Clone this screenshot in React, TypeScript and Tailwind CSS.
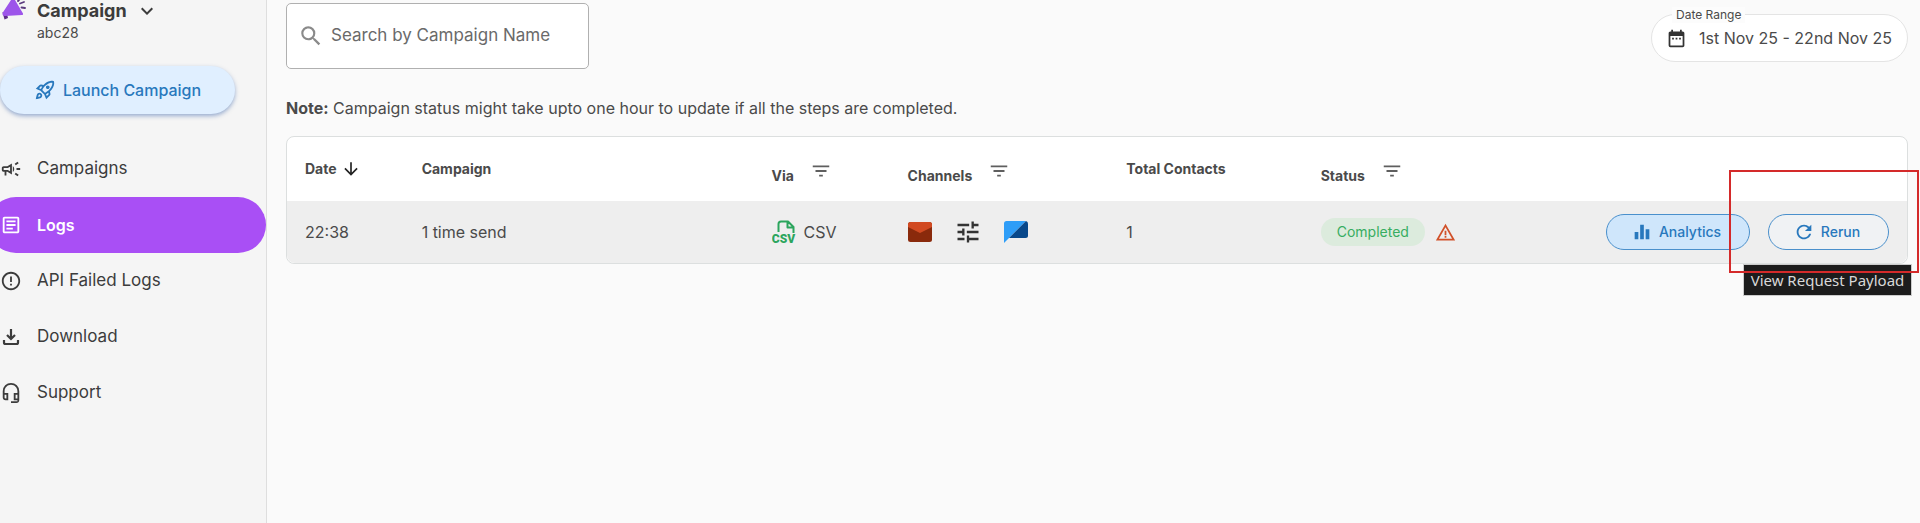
import type { ReactNode } from 'react'
import {
  MdArrowDownward,
  MdDateRange,
  MdEqualizer,
  MdErrorOutline,
  MdFilterList,
  MdKeyboardArrowDown,
  MdOutlineArticle,
  MdOutlineCampaign,
  MdOutlineHeadsetMic,
  MdOutlineRocketLaunch,
  MdRefresh,
  MdSearch,
  MdTune,
  MdWarningAmber,
} from 'react-icons/md'

function Logo() {
  return (
    <svg viewBox="0 0 26 20" className="h-5 w-[26px]" aria-hidden="true">
      <path d="M2.500 12l2 7.500 3.500-1.500-1-4z" fill="#5b2a86" />
      <path d="M11 0h4l8 13.500q.500 1.500-1 1.500L5 16q-3 0-2.500-3z" fill="#9d55ea" />
      <path
        d="M18 1l1-1M20 3.500l4-1.500M21.500 7.500l3.500.500"
        stroke="#5b3a7e"
        strokeWidth="1.800"
        strokeLinecap="round"
      />
    </svg>
  )
}

function DownloadIcon() {
  return (
    <svg
      viewBox="0 0 22 22"
      className="size-[22px]"
      fill="none"
      stroke="currentColor"
      strokeWidth="2.200"
      aria-hidden="true"
    >
      <path d="M11 3v10M7 9l4 4 4-4M4 14v2.500q0 1.500 1.500 1.500h11q1.500 0 1.500-1.500V14" />
    </svg>
  )
}

function CsvIcon() {
  return (
    <svg viewBox="0 0 24 24" className="size-6" fill="none" aria-hidden="true">
      <path
        d="M6.500 12V4q0-2.500 2.500-2.500H16l5.500 5.500v6M15.500 1.500V7.500H21.500"
        stroke="currentColor"
        strokeWidth="2"
        strokeLinejoin="round"
      />
      <text
        x="11.500"
        y="22.500"
        textAnchor="middle"
        fill="currentColor"
        className="font-['Roboto',sans-serif] text-[12px] font-black"
      >
        CSV
      </text>
    </svg>
  )
}

function MailIcon() {
  return (
    <svg viewBox="0 0 24 20" className="h-5 w-6" role="img" aria-label="Email">
      <rect width="24" height="20" rx="2.500" fill="#8a2a0c" />
      <path d="M0 5V2.500Q0 0 2.500 0h19Q24 0 24 2.500V5l-12 6z" fill="#d14a22" />
    </svg>
  )
}

function ChatIcon() {
  return (
    <svg viewBox="0 0 24 22" className="h-[22px] w-6" role="img" aria-label="RCS">
      <path d="M2.500 0H22L5 17l-5 5V2.500Q0 0 2.500 0z" fill="#2e9df7" />
      <path d="M22 0q2 .500 2 2.500V14.500q0 2.500-2.500 2.500H5z" fill="#08488a" />
    </svg>
  )
}

function NavItem({ icon, label, active }: { icon: ReactNode; label: string; active?: boolean }) {
  return (
    <a
      href="#"
      className={
        active
          ? 'flex h-14 items-center gap-[15px] rounded-full bg-[#a94ff5] pl-3 text-base font-semibold text-white'
          : 'flex h-14 items-center gap-[15px] pl-3 text-[17px] text-[#3c3c3c]'
      }
    >
      <span className="flex w-[22px] shrink-0 text-[22px] [&_svg]:stroke-current">{icon}</span>
      {label}
    </a>
  )
}

function FilterHeader({ label }: { label: string }) {
  return (
    <div className="flex items-start gap-4 pt-[5px]">
      <span className="pt-[9px]">{label}</span>
      <button type="button" aria-label={`Filter ${label}`} className="pt-[3px] text-[#5f5f5f]">
        <MdFilterList className="size-[22px]" />
      </button>
    </div>
  )
}

export default function App() {
  return (
    <div className="flex min-h-screen overflow-hidden bg-[#fafafa] font-['Inter',sans-serif] text-[#4a4a4a]">
      <aside className="w-[267px] shrink-0 border-r border-[#dedede] bg-[#f5f5f5]">
        <div className="flex gap-[11px]">
          <Logo />
          <div>
            <button
              type="button"
              className="flex items-center gap-2 text-lg leading-[22px] font-bold text-[#3c3c3c]"
            >
              Campaign
              <MdKeyboardArrowDown className="-my-1 size-6" />
            </button>
            <p className="mt-px text-sm">abc28</p>
          </div>
        </div>
        <button
          type="button"
          className="mt-[23px] flex h-12 w-[235px] items-center justify-center gap-[7px] rounded-full bg-[#e0efff] text-base font-medium text-[#2878bd] shadow-[0_2px_4px_rgba(60,100,170,.5)]"
        >
          <MdOutlineRocketLaunch className="size-[22px]" />
          Launch Campaign
        </button>
        <nav className="-ml-3 mt-[27px]">
          <NavItem icon={<MdOutlineCampaign />} label="Campaigns" />
          <NavItem icon={<MdOutlineArticle />} label="Logs" active />
          <NavItem icon={<MdErrorOutline />} label="API Failed Logs" />
          <NavItem icon={<DownloadIcon />} label="Download" />
          <NavItem icon={<MdOutlineHeadsetMic />} label="Support" />
        </nav>
      </aside>

      <main className="min-w-0 flex-1 pt-[3px] pr-3 pl-[19px]">
        <div className="flex items-start justify-between">
          <label className="flex h-[66px] w-[303px] items-center gap-[7px] rounded-[5px] border border-[#b0b0b0] bg-white pl-[11px]">
            <MdSearch className="size-[26px] shrink-0 text-[#8a8a8a]" />
            <input
              type="text"
              aria-label="Search by Campaign Name"
              placeholder="Search by Campaign Name"
              className="w-full bg-transparent text-[17px] outline-none placeholder:text-[#6a6a6a]"
            />
          </label>
          <div className="relative mt-[11px] flex h-12 w-[257px] items-center gap-3 rounded-full border border-[#e4e4e4] bg-white pl-[14px]">
            <span id="date-range-label" className="absolute -top-2 left-5 bg-[#fcfcfc] px-1 text-xs">
              Date Range
            </span>
            <MdDateRange className="size-[21px] shrink-0 text-[#333]" />
            <button type="button" aria-describedby="date-range-label" className="text-base whitespace-nowrap">
              1st Nov 25 - 22nd Nov 25
            </button>
          </div>
        </div>

        <p className="mt-[27px] text-base">
          <b className="font-bold">Note:</b> Campaign status might take upto one hour to update if all the steps are
          completed.
        </p>

        <div className="mt-4 rounded-lg border border-[#dcdfdf] bg-white">
          <table className="w-full table-fixed text-left">
            <thead>
              <tr className="h-16 text-sm [&>th]:pl-[18px] [&>th]:font-bold">
                <th className="w-[7.2%]">
                  <button type="button" className="flex items-center gap-1">
                    Date
                    <MdArrowDownward className="size-5 stroke-[#222] text-[#222]" />
                  </button>
                </th>
                <th className="w-[21.6%]">Campaign</th>
                <th className="w-[8.4%]">
                  <FilterHeader label="Via" />
                </th>
                <th className="w-[13.5%]">
                  <FilterHeader label="Channels" />
                </th>
                <th className="w-[12%]">Total Contacts</th>
                <th className="w-[16%]">
                  <FilterHeader label="Status" />
                </th>
                <th aria-label="Actions" />
              </tr>
            </thead>
            <tbody>
              <tr className="h-[62px] bg-[#eee] text-base [&>td]:pl-[18px]">
                <td className="rounded-bl-lg">22:38</td>
                <td>1 time send</td>
                <td>
                  <div className="flex items-center gap-2">
                    <span className="text-[#2ba55d]">
                      <CsvIcon />
                    </span>
                    CSV
                  </div>
                </td>
                <td>
                  <div className="flex items-center gap-[22px]">
                    <MailIcon />
                    <MdTune className="size-7 text-[#333]" />
                    <ChatIcon />
                  </div>
                </td>
                <td>1</td>
                <td>
                  <div className="flex items-center gap-[10px]">
                    <span className="flex h-7 items-center rounded-full bg-[#dcebdd] px-4 text-sm text-[#37ad61]">
                      Completed
                    </span>
                    <MdWarningAmber className="size-[21px] text-[#d1512a]" />
                  </div>
                </td>
                <td className="relative rounded-br-lg">
                  <div className="flex justify-end gap-[18px] pr-[18px] text-sm font-medium text-[#2878bd]">
                    <button
                      type="button"
                      className="flex h-9 w-36 items-center justify-center gap-[6px] rounded-full border border-[#4a90cc] bg-[#cfe6fb] pr-1"
                    >
                      <MdEqualizer className="size-[22px]" />
                      Analytics
                    </button>
                    <button
                      type="button"
                      className="flex h-9 w-[121px] items-center justify-center gap-[6px] rounded-full border border-[#4a90cc] bg-[#f0f2f4] pr-1"
                    >
                      <MdRefresh className="size-[22px] stroke-current" />
                      Rerun
                    </button>
                  </div>
                  <div
                    role="tooltip"
                    className="absolute top-full -right-[5px] mt-px flex h-8 w-[169px] items-center justify-center border border-[#ccc] bg-[#1c1c1c] font-['Noto_Sans',sans-serif] text-[15px] whitespace-nowrap text-[#d8d8d8]"
                  >
                    View Request Payload
                  </div>
                  <div className="pointer-events-none absolute -top-[31px] -right-3 h-[103px] w-[190px] border-2 border-[#d42a2a]" />
                </td>
              </tr>
            </tbody>
          </table>
        </div>
      </main>
    </div>
  )
}
